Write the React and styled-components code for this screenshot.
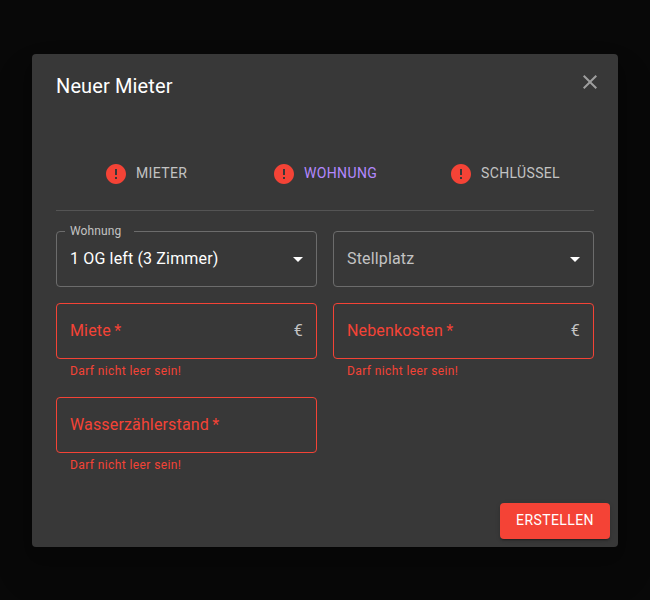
import React from 'react';
import styled, { createGlobalStyle } from 'styled-components';

const Global = createGlobalStyle`
  *, *::before, *::after { box-sizing: border-box; }
  body { margin: 0; background: #080808; font-family: Roboto, "Liberation Sans", sans-serif; color: #fff; }
`;

const Backdrop = styled.div`
  height: 600px;
  padding: 54px 32px 53px;
  background: #080808;
`;
const Dialog = styled.section`
  height: 493px;
  display: flex;
  flex-direction: column;
  background: #383838;
  border-radius: 4px;
  box-shadow: 0 11px 15px -7px rgba(0,0,0,.2), 0 24px 38px 3px rgba(0,0,0,.14);
`;
const Header = styled.header`
  height: 64px;
  padding: 16px 16px 16px 24px;
  display: flex;
  justify-content: space-between;
`;
const Title = styled.h2`
  margin: 0;
  font-size: 20px;
  line-height: 32px;
  font-weight: 450;
  letter-spacing: 0.12px;
`;
const CloseButton = styled.button`
  width: 24px;
  height: 24px;
  padding: 0;
  border: 0;
  background: none;
  color: #9e9e9e;
  svg { display: block; }
`;
const Body = styled.div`
  padding: 32px 24px 0;
  flex: 1;
`;
const Tabs = styled.nav`
  display: grid;
  grid-template-columns: 168px 177px 1fr;
  height: 61px;
  padding: 0 0 12px 48px;
  border-bottom: 1px solid #545454;
`;
const Tab = styled.button`
  display: flex;
  align-items: center;
  gap: 8px;
  padding: 0;
  border: 0;
  background: none;
  color: ${p => (p.$active ? '#b388ff' : '#c3c3c3')};
  font: 450 14px/22px Roboto, sans-serif;
  letter-spacing: 0.36px;
  text-transform: uppercase;
`;
const TabLabel = styled.span`
  padding-bottom: 2px;
`;
const FieldGrid = styled.div`
  display: grid;
  grid-template-columns: 261px 261px;
  column-gap: 16px;
  row-gap: 16px;
  padding-top: 20px;
`;
const Field = styled.div`
  min-width: 0;
`;
const Outline = styled.div`
  position: relative;
  display: flex;
  align-items: center;
  justify-content: space-between;
  height: 56px;
  padding: 0 13px;
  border: 1px solid ${p => (p.$error ? '#f44336' : '#6c6c6c')};
  border-radius: 4px;
  color: ${p => (p.$error ? '#f44336' : p.$filled ? '#fff' : '#c3c3c3')};
  font-size: 16px;
  letter-spacing: 0.15px;
`;
const Value = styled.span`
  padding-bottom: 2px;
`;
const FloatingLabel = styled.label`
  position: absolute;
  top: -8px;
  left: 8px;
  width: 69px;
  padding-left: 5px;
  background: #383838;
  color: #c3c3c3;
  font-size: 12px;
  line-height: 14px;
  letter-spacing: 0.11px;
`;
const Unit = styled(Value)`
  color: #c3c3c3;
`;
const Helper = styled.p`
  margin: 3px 14px 1px;
  color: #f44336;
  font-size: 12px;
  line-height: 18px;
  letter-spacing: 0.4px;
`;
const Arrow = styled.svg`
  margin-right: -7px;
  fill: #fff;
`;
const Footer = styled.footer`
  display: flex;
  justify-content: flex-end;
  padding: 8px;
`;
const SubmitButton = styled.button`
  width: 110px;
  height: 36px;
  padding: 0 0 2px;
  border: 0;
  border-radius: 4px;
  background: #f44336;
  color: #fff;
  font: 450 14px/24px Roboto, sans-serif;
  letter-spacing: 0.4px;
  text-transform: uppercase;
  box-shadow: 0 3px 1px -2px rgba(0,0,0,.2), 0 2px 2px rgba(0,0,0,.14), 0 1px 5px rgba(0,0,0,.12);
`;

const ErrorIcon = () => (
  <svg width="24" height="24" viewBox="0 0 24 24" fill="#f44336">
    <path d="M12 2C6.48 2 2 6.48 2 12s4.48 10 10 10 10-4.48 10-10S17.52 2 12 2zm1 15h-2v-2h2v2zm0-4h-2V7h2v6z" />
  </svg>
);
const DropArrow = () => (
  <Arrow width="24" height="24" viewBox="0 0 24 24"><path d="M7 10l5 5 5-5z" /></Arrow>
);

const tabs = ['Mieter', 'Wohnung', 'Schlüssel'];

function NumberField({ label, unit }) {
  return (
    <Field>
      <Outline $error>
        <Value>{label}{'\u2009*'}</Value>
        {unit && <Unit>{unit}</Unit>}
      </Outline>
      <Helper>Darf nicht leer sein!</Helper>
    </Field>
  );
}

export default function App() {
  return (
    <Backdrop>
      <Global />
      <Dialog>
        <Header>
          <Title>Neuer Mieter</Title>
          <CloseButton aria-label="Schließen">
            <svg width="24" height="24" viewBox="0 0 24 24" fill="currentColor">
              <path d="M19 6.41L17.59 5 12 10.59 6.41 5 5 6.41 10.59 12 5 17.59 6.41 19 12 13.41 17.59 19 19 17.59 13.41 12z" />
            </svg>
          </CloseButton>
        </Header>
        <Body>
          <Tabs>
            {tabs.map(name => (
              <Tab key={name} $active={name === 'Wohnung'}>
                <ErrorIcon />
                <TabLabel>{name}</TabLabel>
              </Tab>
            ))}
          </Tabs>
          <FieldGrid>
            <Field>
              <Outline $filled>
                <FloatingLabel>Wohnung</FloatingLabel>
                <Value>1 OG left (3 Zimmer)</Value>
                <DropArrow />
              </Outline>
            </Field>
            <Field>
              <Outline><Value>Stellplatz</Value><DropArrow /></Outline>
            </Field>
            <NumberField label="Miete" unit="€" />
            <NumberField label="Nebenkosten" unit="€" />
            <NumberField label="Wasserzählerstand" />
          </FieldGrid>
        </Body>
        <Footer><SubmitButton>Erstellen</SubmitButton></Footer>
      </Dialog>
    </Backdrop>
  );
}
